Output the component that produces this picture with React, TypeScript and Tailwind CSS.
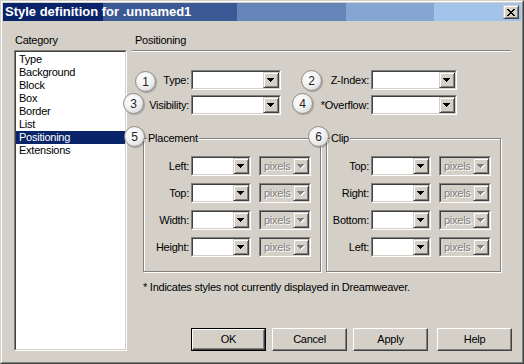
import React from "react";

// Windows 2000 style "Style definition" dialog with numbered callouts

const categories = ["Type", "Background", "Block", "Box", "Border", "List", "Positioning", "Extensions"];

const placementRows = ["Left:", "Top:", "Width:", "Height:"];
const clipRows = ["Top:", "Right:", "Bottom:", "Left:"];

const callouts = [
  { n: "1", cls: "left-[134px] top-[70px]" },
  { n: "2", cls: "left-[300px] top-[69px]" },
  { n: "3", cls: "left-[122px] top-[92px]" },
  { n: "4", cls: "left-[291px] top-[92px]" },
  { n: "5", cls: "left-[123px] top-[125px]" },
  { n: "6", cls: "left-[307px] top-[125px]" },
];

function Arrow({ disabled }: { disabled?: boolean }) {
  const c = disabled ? "#808080" : "#000";
  return (
    <div className="flex h-full w-[16px] items-center justify-center border border-t-[#d4d0c8] border-l-[#d4d0c8] border-r-[#404040] border-b-[#404040] bg-[#d4d0c8] shadow-[inset_1px_1px_0_#fff,inset_-1px_-1px_0_#808080]">
      <svg width="8" height="5" viewBox="0 0 8 5" shapeRendering="crispEdges">
        {disabled && (
          <g fill="#fff">
            <rect x="1" y="1" width="7" height="1" />
            <rect x="2" y="2" width="5" height="1" />
            <rect x="3" y="3" width="3" height="1" />
            <rect x="4" y="4" width="1" height="1" />
          </g>
        )}
        <g fill={c}>
          <rect x="0" y="0" width="7" height="1" />
          <rect x="1" y="1" width="5" height="1" />
          <rect x="2" y="2" width="3" height="1" />
          <rect x="3" y="3" width="1" height="1" />
        </g>
      </svg>
    </div>
  );
}

function Combo({ className, disabled, text }: { className: string; disabled?: boolean; text?: string }) {
  return (
    <div className={"h-[20px] border border-t-[#808080] border-l-[#808080] border-r-white border-b-white " + className}>
      <div
        className={
          "flex h-full border border-t-[#404040] border-l-[#404040] border-r-[#d4d0c8] border-b-[#d4d0c8] " +
          (disabled ? "bg-[#d4d0c8]" : "bg-white")
        }
      >
        <div className="flex-1 pl-[3px] leading-[16px] text-[#808080] [text-shadow:1px_1px_0_#fff]">{text}</div>
        <Arrow disabled={disabled} />
      </div>
    </div>
  );
}

function Group({ title, rows, labelW, className }: { title: string; rows: string[]; labelW: string; className: string }) {
  return (
    <fieldset className={"border border-[#808080] px-0 pt-[11px] pb-[14px] shadow-[inset_1px_1px_0_#fff,1px_1px_0_#fff] " + className}>
      <legend className="ml-[3px] bg-[#d4d0c8] px-[1px] leading-[13px]">{title}</legend>
      <div className="flex flex-col gap-[7px]">
        {rows.map((r) => (
          <div key={r} className="flex items-center">
            <span className={"text-right " + labelW}>{r}</span>
            <Combo className="ml-[2px] w-[60px]" />
            <Combo className="ml-[8px] w-[52px]" disabled text="pixels" />
          </div>
        ))}
      </div>
    </fieldset>
  );
}

function Btn({ label, def, className = "" }: { label: string; def?: boolean; className?: string }) {
  const inner = (
    <div className="flex h-full w-full items-center justify-center border border-t-white border-l-white border-r-[#404040] border-b-[#404040] shadow-[inset_-1px_-1px_0_#808080]">
      {label}
    </div>
  );
  return (
    <div className={"h-[23px] w-[75px] " + (def ? "border border-black " : "") + className}>{inner}</div>
  );
}

export default function App() {
  return (
    <div className="relative h-[364px] w-[524px] border border-t-[#d4d0c8] border-l-[#d4d0c8] border-r-[#404040] border-b-[#404040] bg-[#d4d0c8] font-['Liberation_Sans',Arial,sans-serif] text-[11px] tracking-[-0.25px] text-black">
      <div className="flex h-full flex-col border border-t-white border-l-white border-r-[#808080] border-b-[#808080] p-[1px]">
        {/* title bar */}
        <div className="flex h-[18px] items-center bg-[linear-gradient(to_right,#0a246a_0,#0a246a_100px,#3b5995_100px,#3b5995_234px,#6584b8_234px,#6584b8_343px,#85a6d3_343px,#85a6d3_431px,#a2c4ea_431px)] pl-[2px]">
          <span className="text-[13px] font-bold tracking-normal text-white">Style definition for .unnamed1</span>
          <div className="ml-auto mr-[2px] flex h-[14px] w-[16px] items-center justify-center border border-t-[#d4d0c8] border-l-[#d4d0c8] border-r-[#404040] border-b-[#404040] bg-[#d4d0c8] shadow-[inset_1px_1px_0_#fff,inset_-1px_-1px_0_#808080]">
            <svg width="8" height="7" viewBox="0 0 8 7" shapeRendering="crispEdges">
              <g fill="#000">
                <rect x="0" y="0" width="2" height="1" />
                <rect x="6" y="0" width="2" height="1" />
                <rect x="1" y="1" width="2" height="1" />
                <rect x="5" y="1" width="2" height="1" />
                <rect x="2" y="2" width="4" height="1" />
                <rect x="3" y="3" width="2" height="1" />
                <rect x="2" y="4" width="4" height="1" />
                <rect x="1" y="5" width="2" height="1" />
                <rect x="5" y="5" width="2" height="1" />
                <rect x="0" y="6" width="2" height="1" />
                <rect x="6" y="6" width="2" height="1" />
              </g>
            </svg>
          </div>
        </div>

        <div className="flex flex-1">
          {/* category list */}
          <div className="ml-[11px] flex w-[113px] flex-col">
            <div className="mt-[13px] pl-[1px] leading-[13px]">Category</div>
            <div className="mt-[3px] h-[301px] border border-t-[#808080] border-l-[#808080] border-r-white border-b-white">
              <div className="h-full border border-t-[#404040] border-l-[#404040] border-r-[#d4d0c8] border-b-[#d4d0c8] bg-white pt-[1px]">
                {categories.map((c) => (
                  <div
                    key={c}
                    className={
                      "h-[13px] pl-[3px] leading-[13px] " + (c === "Positioning" ? "bg-[#0a246a] text-white" : "")
                    }
                  >
                    {c}
                  </div>
                ))}
              </div>
            </div>
          </div>

          {/* positioning panel */}
          <div className="ml-[5px] flex w-[380px] flex-col">
            <div className="mt-[13px] pl-[3px] leading-[13px]">Positioning</div>
            <div className="mt-[3px] h-[2px] w-[379px] border-t border-b border-t-[#808080] border-b-white" />

            <div className="mt-[18px] flex items-center">
              <span className="w-[57px] text-right">Type:</span>
              <Combo className="ml-[2px] w-[90px]" />
              <span className="w-[88px] text-right">Z-Index:</span>
              <Combo className="ml-[2px] w-[86px]" />
            </div>
            <div className="mt-[5px] flex items-center">
              <span className="w-[57px] text-right">Visibility:</span>
              <Combo className="ml-[2px] w-[90px]" />
              <span className="w-[88px] text-right">*Overflow:</span>
              <Combo className="ml-[2px] w-[86px]" />
            </div>

            <div className="ml-[11px] mt-[17px] flex gap-[5px]">
              <Group title="Placement" rows={placementRows} labelW="w-[45px]" className="w-[178px]" />
              <Group title="Clip" rows={clipRows} labelW="w-[42px]" className="w-[175px]" />
            </div>

            <div className="ml-[11px] mt-[9px] leading-[13px]">* Indicates styles not currently displayed in Dreamweaver.</div>

            <div className="mt-[34px] flex justify-end gap-[6px]">
              <Btn label="OK" def />
              <Btn label="Cancel" />
              <Btn label="Apply" />
              <Btn label="Help" className="ml-[3px]" />
            </div>
          </div>
        </div>
      </div>

      {/* numbered callouts drawn over the dialog */}
      {callouts.map((c) => (
        <div
          key={c.n}
          className={
            "absolute flex h-[21px] w-[21px] items-center justify-center rounded-full border border-[#8c8c8c] bg-[radial-gradient(circle_at_40%_35%,#ffffff_0%,#f2f2f2_45%,#d0d0d0_100%)] text-[12px] font-medium tracking-normal text-[#222] shadow-[1px_1px_1px_rgba(0,0,0,0.25)] " +
            c.cls
          }
        >
          {c.n}
        </div>
      ))}
    </div>
  );
}
